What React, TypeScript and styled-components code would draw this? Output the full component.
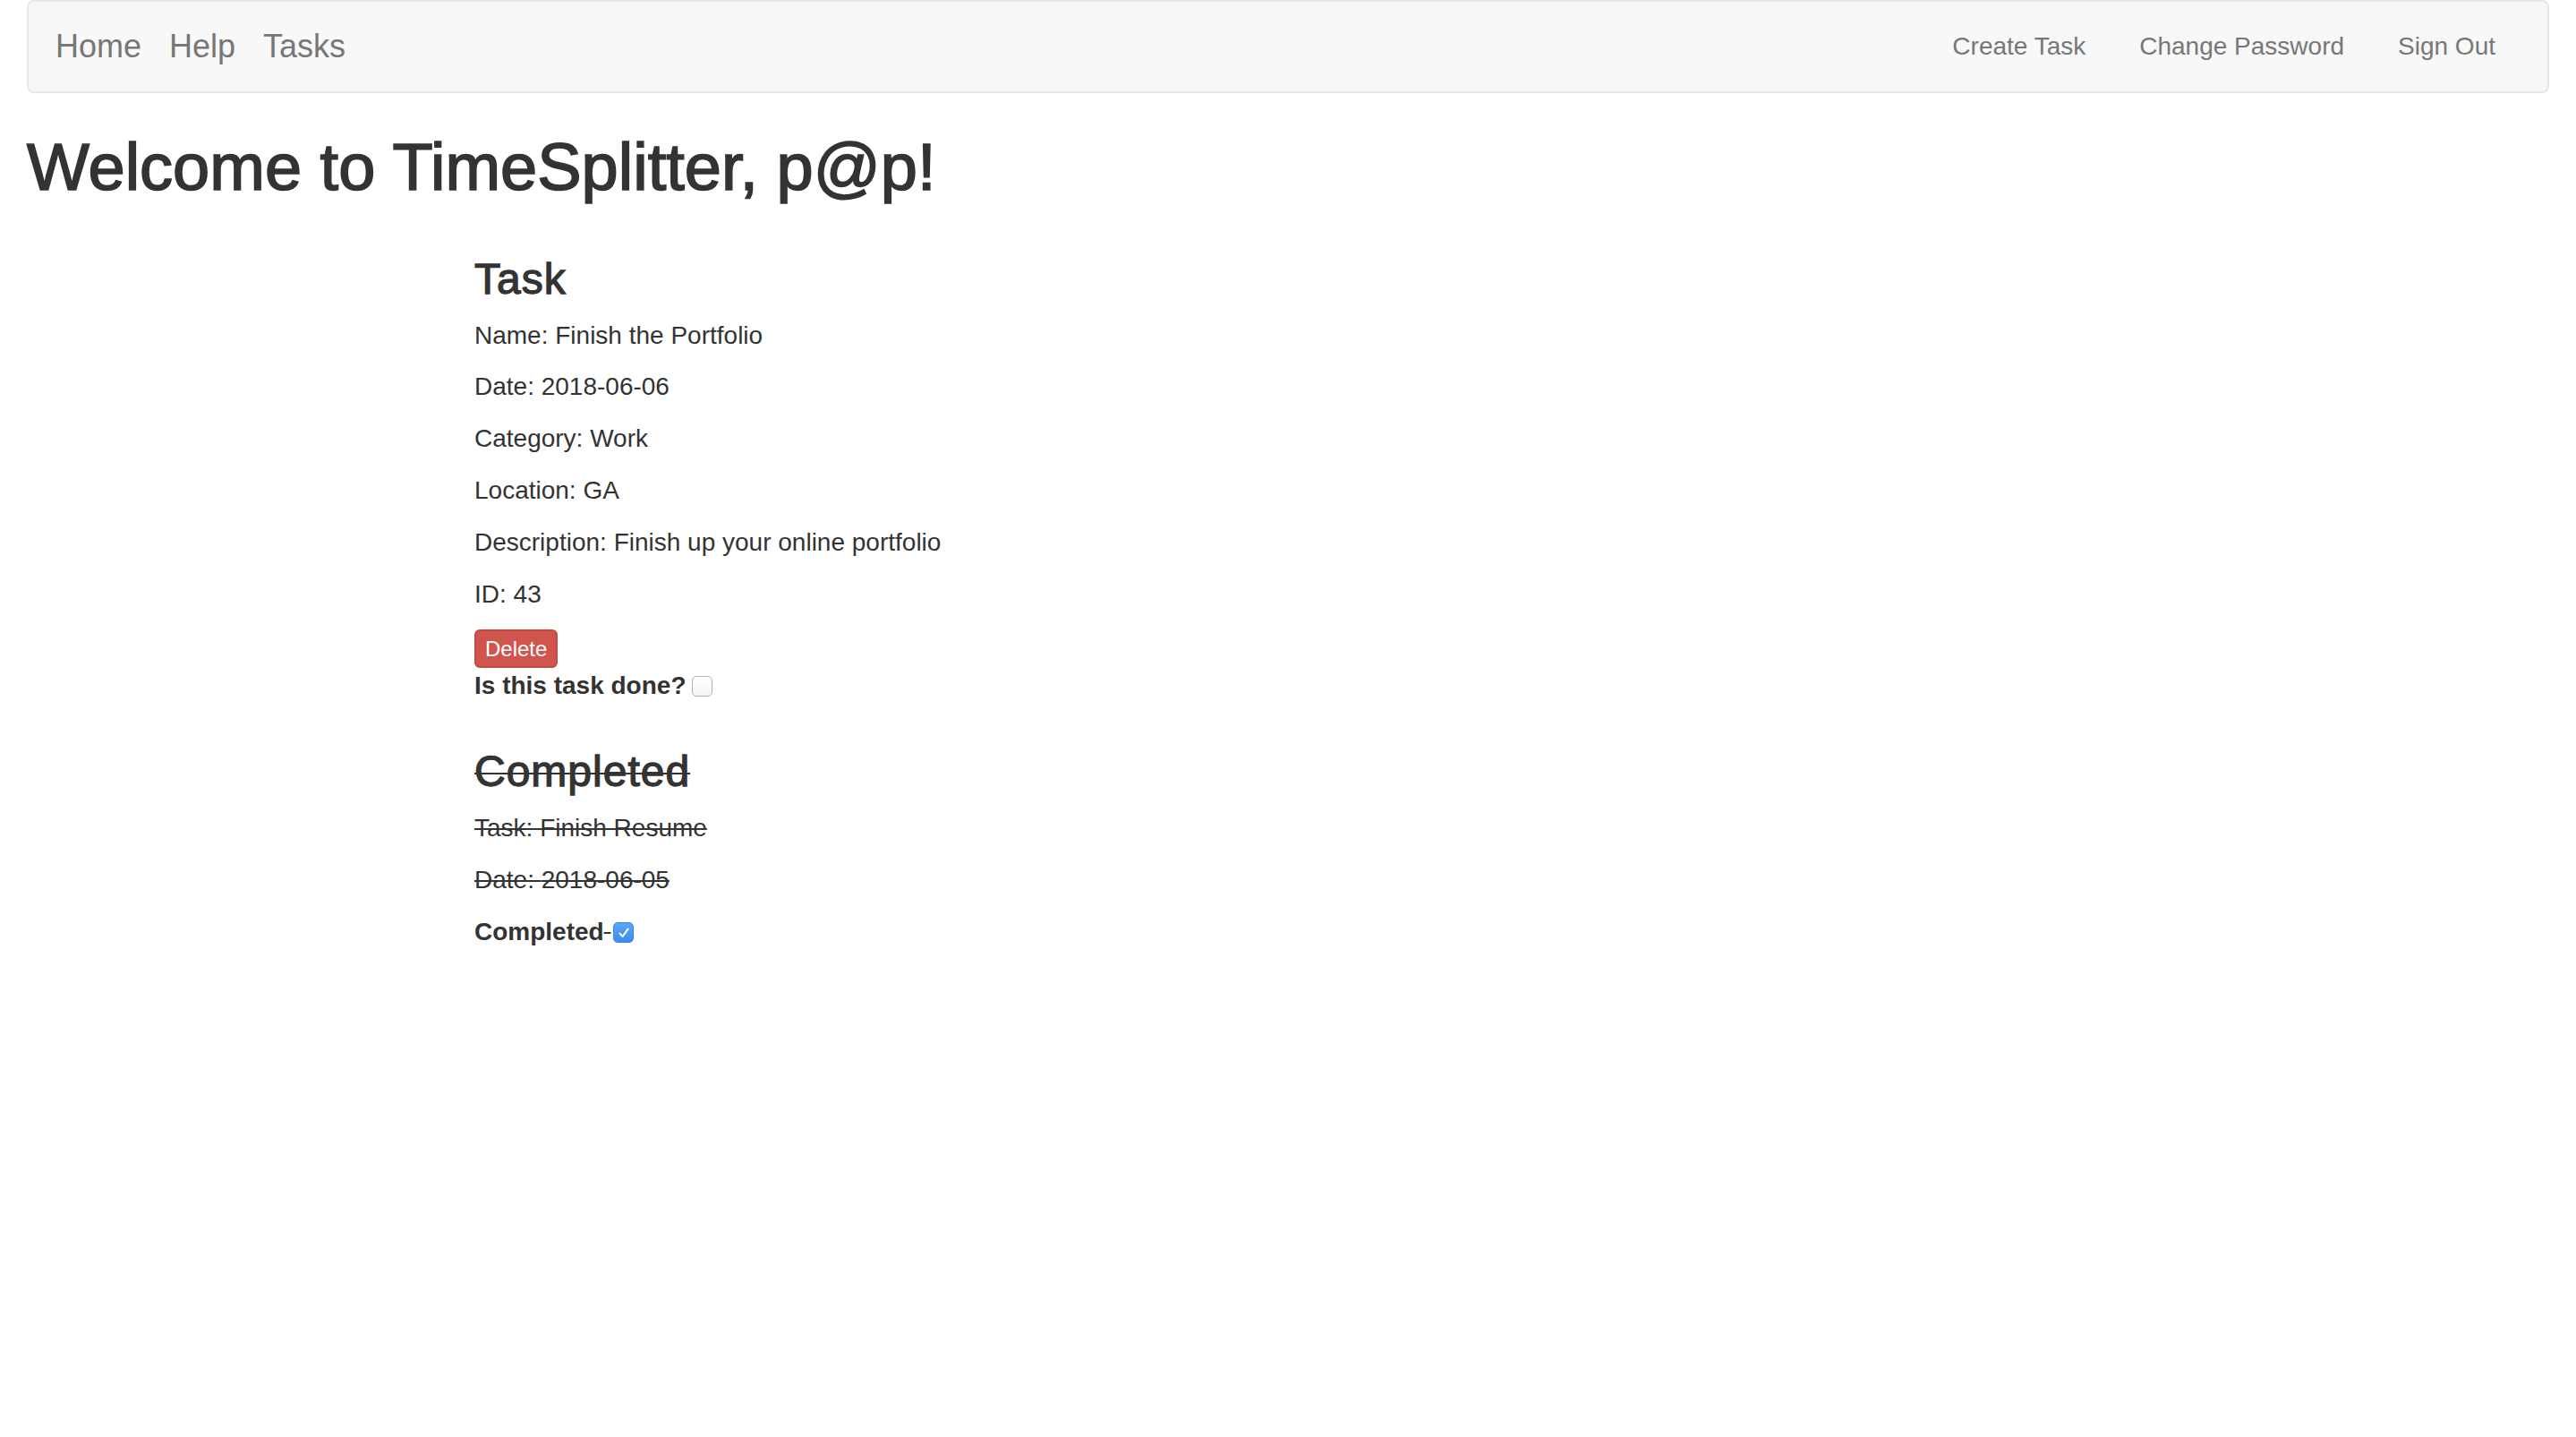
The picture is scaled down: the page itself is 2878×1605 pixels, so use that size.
import React from "react";
import styled, { createGlobalStyle } from "styled-components";

const GlobalStyle = createGlobalStyle`
  html, body {
    margin: 0;
    padding: 0;
    background: #ffffff;
  }
  body {
    font-family: "Liberation Sans", Arial, Helvetica, sans-serif;
    color: #333333;
  }
  * {
    box-sizing: border-box;
  }
`;

const Page = styled.div`
  width: 100%;
  min-height: 1605px;
`;

const Navbar = styled.nav`
  margin: 0 30px;
  height: 104px;
  border: 2px solid #e7e7e7;
  border-radius: 8px;
  background: #f8f8f8;
  display: flex;
  align-items: center;
  justify-content: space-between;
`;

const NavGroup = styled.div<{ $side: "left" | "right" }>`
  display: flex;
  align-items: center;
  gap: ${(p) => (p.$side === "left" ? "31px" : "60px")};
  padding-left: ${(p) => (p.$side === "left" ? "30px" : "0")};
  padding-right: ${(p) => (p.$side === "right" ? "58px" : "0")};
`;

const NavLink = styled.a<{ $big?: boolean }>`
  font-size: ${(p) => (p.$big ? "36px" : "28px")};
  line-height: 40px;
  color: #777777;
  text-decoration: none;
  cursor: pointer;
  white-space: nowrap;
`;

const Title = styled.h1`
  margin: 43px 30px 0;
  font-size: 74px;
  line-height: 80px;
  font-weight: 400;
  color: #333333;
  -webkit-text-stroke: 1.7px #333333;
  white-space: nowrap;
`;

const Content = styled.main`
  padding-left: 530px;
`;

const Section = styled.section<{ $done?: boolean }>`
  margin-top: ${(p) => (p.$done ? "49px" : "57.6px")};
  text-decoration: ${(p) => (p.$done ? "line-through" : "none")};
  text-decoration-thickness: 2px;
`;

const SectionTitle = styled.h3`
  margin: 0 0 17px;
  font-size: 48px;
  line-height: 53px;
  font-weight: 400;
  letter-spacing: 1px;
  color: #333333;
  -webkit-text-stroke: 1.3px #333333;
`;

const Field = styled.p`
  margin: 0 0 17.8px;
  font-size: 28px;
  line-height: 40px;
`;

const DeleteButton = styled.button`
  display: block;
  margin: 19.4px 0 0;
  padding: 2px 10px;
  font-family: "Liberation Sans", Arial, Helvetica, sans-serif;
  font-size: 24px;
  line-height: 35px;
  color: #ffffff;
  background: #d0554f;
  border: 2px solid #c9483f;
  border-radius: 6px;
  cursor: pointer;
`;

const CheckRow = styled.div`
  font-size: 28px;
  line-height: 40px;
  white-space: nowrap;
`;

const CheckLabel = styled.label`
  display: inline-block;
  font-weight: 700;
`;

const Checkbox = styled.span<{ $checked?: boolean; $gap: number }>`
  display: inline-block;
  width: 23px;
  height: 23px;
  margin-left: ${(p) => p.$gap}px;
  vertical-align: -3px;
  border-radius: 5px;
  border: ${(p) => (p.$checked ? "1px solid #3a85e6" : "1.5px solid #b3b3b3")};
  background: ${(p) =>
    p.$checked
      ? "linear-gradient(#5da5f5, #3b8cf0)"
      : "linear-gradient(#ffffff, #f4f4f4)"};
  position: relative;

  svg {
    position: absolute;
    left: 3px;
    top: 3px;
  }
`;

function CheckMark() {
  return (
    <svg width="16" height="16" viewBox="0 0 16 16" aria-hidden="true">
      <path
        d="M3.5 8.6 L6.6 12 L12.6 3.6"
        fill="none"
        stroke="#ffffff"
        strokeWidth="2"
        strokeLinecap="round"
        strokeLinejoin="round"
      />
    </svg>
  );
}

const task = {
  name: "Finish the Portfolio",
  date: "2018-06-06",
  category: "Work",
  location: "GA",
  description: "Finish up your online portfolio",
  id: 43,
};

const done = {
  name: "Finish Resume",
  date: "2018-06-05",
};

export default function App() {
  return (
    <Page>
      <GlobalStyle />
      <Navbar>
        <NavGroup $side="left">
          <NavLink $big>Home</NavLink>
          <NavLink $big>Help</NavLink>
          <NavLink $big>Tasks</NavLink>
        </NavGroup>
        <NavGroup $side="right">
          <NavLink>Create Task</NavLink>
          <NavLink>Change Password</NavLink>
          <NavLink>Sign Out</NavLink>
        </NavGroup>
      </Navbar>
      <Title>Welcome to TimeSplitter, p@p!</Title>
      <Content>
        <Section>
          <SectionTitle>Task</SectionTitle>
          <Field>Name: {task.name}</Field>
          <Field>Date: {task.date}</Field>
          <Field>Category: {task.category}</Field>
          <Field>Location: {task.location}</Field>
          <Field>Description: {task.description}</Field>
          <Field>ID: {task.id}</Field>
          <DeleteButton>Delete</DeleteButton>
          <CheckRow>
            <CheckLabel>Is this task done?</CheckLabel>
            <Checkbox $gap={6} />
          </CheckRow>
        </Section>
        <Section $done>
          <SectionTitle>Completed</SectionTitle>
          <Field>Task: {done.name}</Field>
          <Field>Date: {done.date}</Field>
          <CheckRow>
            <CheckLabel>Completed</CheckLabel>{" "}
            <Checkbox $checked $gap={3}>
              <CheckMark />
            </Checkbox>
          </CheckRow>
        </Section>
      </Content>
    </Page>
  );
}
